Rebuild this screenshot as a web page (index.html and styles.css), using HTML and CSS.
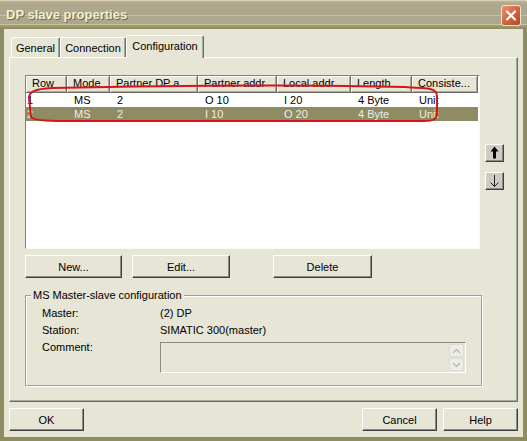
FILE: index.html
```html
<!DOCTYPE html>
<html>
<head>
<meta charset="utf-8">
<title>DP slave properties</title>
<link rel="stylesheet" href="styles.css">
</head>
<body>
<div class="window">
  <div class="titlebar">
    <span class="title">DP slave properties</span>
    <div class="close">
      <svg width="18" height="19" viewBox="0 0 18 19"><path d="M5 5.5 L13 13.5 M13 5.5 L5 13.5" stroke="#fff" stroke-width="2.2" stroke-linecap="round"/></svg>
    </div>
  </div>
  <div class="client">
    <div class="tabs">
      <div class="tab tab-general">General</div>
      <div class="tab tab-connection">Connection</div>
      <div class="tab tab-config active">Configuration</div>
    </div>
    <div class="panel">
      <div class="list-area">
        <div class="listview">
          <div class="lv-head">
            <div class="hc">Row</div>
            <div class="hc">Mode</div>
            <div class="hc">Partner DP a...</div>
            <div class="hc">Partner addr</div>
            <div class="hc">Local addr</div>
            <div class="hc">Length</div>
            <div class="hc">Consiste...</div>
          </div>
          <div class="lv-row">
            <div class="c first">1</div>
            <div class="c">MS</div>
            <div class="c">2</div>
            <div class="c">O 10</div>
            <div class="c">I 20</div>
            <div class="c">4 Byte</div>
            <div class="c">Unit</div>
          </div>
          <div class="lv-row selected">
            <div class="c first">2</div>
            <div class="c">MS</div>
            <div class="c">2</div>
            <div class="c">I 10</div>
            <div class="c">O 20</div>
            <div class="c">4 Byte</div>
            <div class="c">Unit</div>
          </div>
        </div>
        <div class="arrows">
          <div class="abtn">
            <svg width="17" height="16" viewBox="0 0 17 16"><path d="M8.5 1.5 L12.5 6.5 L10 6.5 L10 13.5 L7 13.5 L7 6.5 L4.5 6.5 Z" fill="#000"/></svg>
          </div>
          <div class="abtn">
            <svg width="17" height="16" viewBox="0 0 17 16"><path d="M8.5 2 L8.5 13.5 M4.5 9.5 L8.5 13.5 L12.5 9.5" fill="none" stroke="#222" stroke-width="1"/></svg>
          </div>
        </div>
      </div>
      <div class="actions">
        <div class="btn btn-new">New...</div>
        <div class="btn btn-edit">Edit...</div>
        <div class="btn btn-delete">Delete</div>
      </div>
      <fieldset class="group">
        <legend>MS Master-slave configuration</legend>
        <div class="props">
          <div class="lbl">Master:</div>
          <div class="val">(2) DP</div>
          <div class="lbl">Station:</div>
          <div class="val">SIMATIC 300(master)</div>
          <div class="lbl">Comment:</div>
          <div class="comment">
            <div class="sbar">
              <div class="sbtn"><svg width="9" height="6" viewBox="0 0 9 6"><path d="M1 5 L4.5 1.5 L8 5" fill="none" stroke="#b9b8ae" stroke-width="1.4"/></svg></div>
              <div class="sbtn"><svg width="9" height="6" viewBox="0 0 9 6"><path d="M1 1 L4.5 4.5 L8 1" fill="none" stroke="#b9b8ae" stroke-width="1.4"/></svg></div>
            </div>
          </div>
        </div>
      </fieldset>
    </div>
    <div class="footer">
      <div class="btn btn-foot">OK</div>
      <div class="foot-right">
        <div class="btn btn-foot">Cancel</div>
        <div class="btn btn-foot">Help</div>
      </div>
    </div>
  </div>
  <svg class="annot" width="527" height="441" viewBox="0 0 527 441">
    <path d="M52 88 C150 86 300 84 405 87 C428 88 437 88 437 96 L437 113 C437 119 434 121 424 121 L80 121 C50 121 34 121 31 117 L29 98 C29 92 34 89 52 88 Z" fill="none" stroke="#d8141a" stroke-width="2"/>
  </svg>
</div>
</body>
</html>
```

FILE: styles.css
```css
* { box-sizing: border-box; }
html, body { margin: 0; padding: 0; }
body {
  font-family: "Liberation Sans", Arial, sans-serif;
  font-size: 11px;
  color: #000;
  background: #8f8c62;
}
.window {
  position: relative;
  width: 527px;
  height: 441px;
  display: flex;
  flex-direction: column;
  overflow: hidden;
}
.titlebar {
  height: 29px;
  flex: none;
  display: flex;
  align-items: center;
  justify-content: space-between;
  padding: 0 6px 0 6px;
  background: linear-gradient(to bottom,
    #dccfb2 0, #dccfb2 1px,
    #bdb797 1px, #aca78d 4px,
    #aca78d 15px, #a3d1a0 15px, #a3d1a0 16px,
    #aca78d 16px, #aca78d 24px,
    #c8c69b 24px, #c8c69b 25px,
    #a3a07a 25px, #8d8a5f 29px);
}
.title {
  font-size: 13px;
  font-weight: bold;
  color: #f4efd4;
  text-shadow: 1px 1px 0 #6f6b48;
}
.close {
  width: 20px;
  height: 21px;
  margin-top: 2px;
  border-radius: 3px;
  border: 1px solid #f1e3d2;
  background: linear-gradient(135deg, #e99670 0%, #d0603b 55%, #b84527 100%);
  display: flex;
  align-items: center;
  justify-content: center;
}
.client {
  flex: 1;
  background: #e6e5d6;
  border-left: 4px solid #8f8c62;
  border-right: 4px solid #8f8c62;
  border-bottom: 4px solid #8f8c62;
  padding: 6px 5px 0 5px;
  display: flex;
  flex-direction: column;
}
.tabs {
  display: flex;
  align-items: flex-end;
  height: 22px;
  padding-left: 2px;
  position: relative;
  z-index: 1;
}
.tab {
  height: 20px;
  display: flex;
  align-items: center;
  justify-content: center;
  border-top: 1px solid #fff;
  border-left: 1px solid #fff;
  border-right: 1px solid #6e6d66;
  border-radius: 2px 2px 0 0;
  box-shadow: inset -1px 0 #a8a79c;
  background: #e6e5d6;
  padding-top: 1px;
}
.tab.active {
  height: 23px;
  margin-bottom: -1px;
  padding-top: 0;
  padding-bottom: 3px;
}
.tab-general { width: 49px; }
.tab-connection { width: 66px; }
.tab-config { width: 78px; }
.panel {
  height: 345px;
  flex: none;
  border: 1px solid;
  border-color: #fff #6e6d66 #6e6d66 #fff;
  box-shadow: inset -1px -1px #a8a79c;
  padding: 17px 0 0 15px;
  display: flex;
  flex-direction: column;
}
.list-area {
  display: flex;
  gap: 5px;
}
.listview {
  width: 455px;
  height: 174px;
  background: #fff;
  border: 1px solid;
  border-color: #828175 #fbfbf6 #fbfbf6 #828175;
}
.lv-head, .lv-row {
  display: grid;
  grid-template-columns: 41px 43px 88px 79px 74px 61px 66px;
  width: 452px;
}
.hc {
  height: 17px;
  line-height: 15px;
  padding-left: 6px;
  background: #e6e5d6;
  border-right: 1px solid #6e6d66;
  border-bottom: 1px solid #6e6d66;
  box-shadow: inset 1px 1px #fff, inset -1px -1px #a8a79c;
  white-space: nowrap;
  overflow: hidden;
}
.lv-row { height: 14px; }
.c {
  line-height: 14px;
  padding-left: 7px;
  white-space: nowrap;
  overflow: hidden;
}
.c.first { padding-left: 1px; }
.lv-row.selected {
  background: #8f8c64;
  color: #eeede4;
}
.arrows {
  display: flex;
  flex-direction: column;
  gap: 10px;
  padding-top: 69px;
}
.abtn {
  width: 19px;
  height: 18px;
  background: #cdcbc4;
  border: 1px solid;
  border-color: #fff #404040 #404040 #fff;
  box-shadow: inset -1px -1px #8a8981;
  display: flex;
  align-items: center;
  justify-content: center;
}
.actions {
  display: flex;
  margin-top: 6px;
  height: 23px;
}
.btn {
  height: 23px;
  display: flex;
  align-items: center;
  justify-content: center;
  background: #e6e5d6;
  border: 1px solid;
  border-color: #fff #404040 #404040 #fff;
  box-shadow: inset -1px -1px #8c8b80;
}
.btn-new { width: 97px; }
.btn-edit { width: 98px; margin-left: 10px; }
.btn-delete { width: 99px; margin-left: 43px; }
.group {
  margin: 11px 0 0 0;
  padding: 0;
  width: 457px;
  height: 97px;
  min-width: 0;
  border: 1px solid #a3a194;
  box-shadow: inset 1px 1px #fff, 1px 1px #fff;
}
.group legend {
  margin-left: 5px;
  padding: 0 2px;
  line-height: 13px;
  background: #e6e5d6;
}
.props {
  display: grid;
  grid-template-columns: 118px 306px;
  row-gap: 1px;
  padding: 3px 0 0 16px;
  line-height: 16px;
}
.comment {
  width: 306px;
  height: 31px;
  margin-top: 3px;
  border: 1px solid;
  border-color: #8c8b80 #fff #fff #8c8b80;
  display: flex;
  justify-content: flex-end;
  padding: 1px 1px 1px 0;
}
.sbar {
  width: 15px;
  display: flex;
  flex-direction: column;
  gap: 1px;
}
.sbtn {
  flex: 1;
  background: #eeeee8;
  border: 1px solid #dcdbd0;
  border-radius: 2px;
  display: flex;
  align-items: center;
  justify-content: center;
}
.footer {
  display: flex;
  justify-content: space-between;
  margin-top: 6px;
}
.foot-right {
  display: flex;
  gap: 6px;
}
.btn-foot { width: 75px; }
.annot {
  position: absolute;
  left: 0;
  top: 0;
  pointer-events: none;
}
```
